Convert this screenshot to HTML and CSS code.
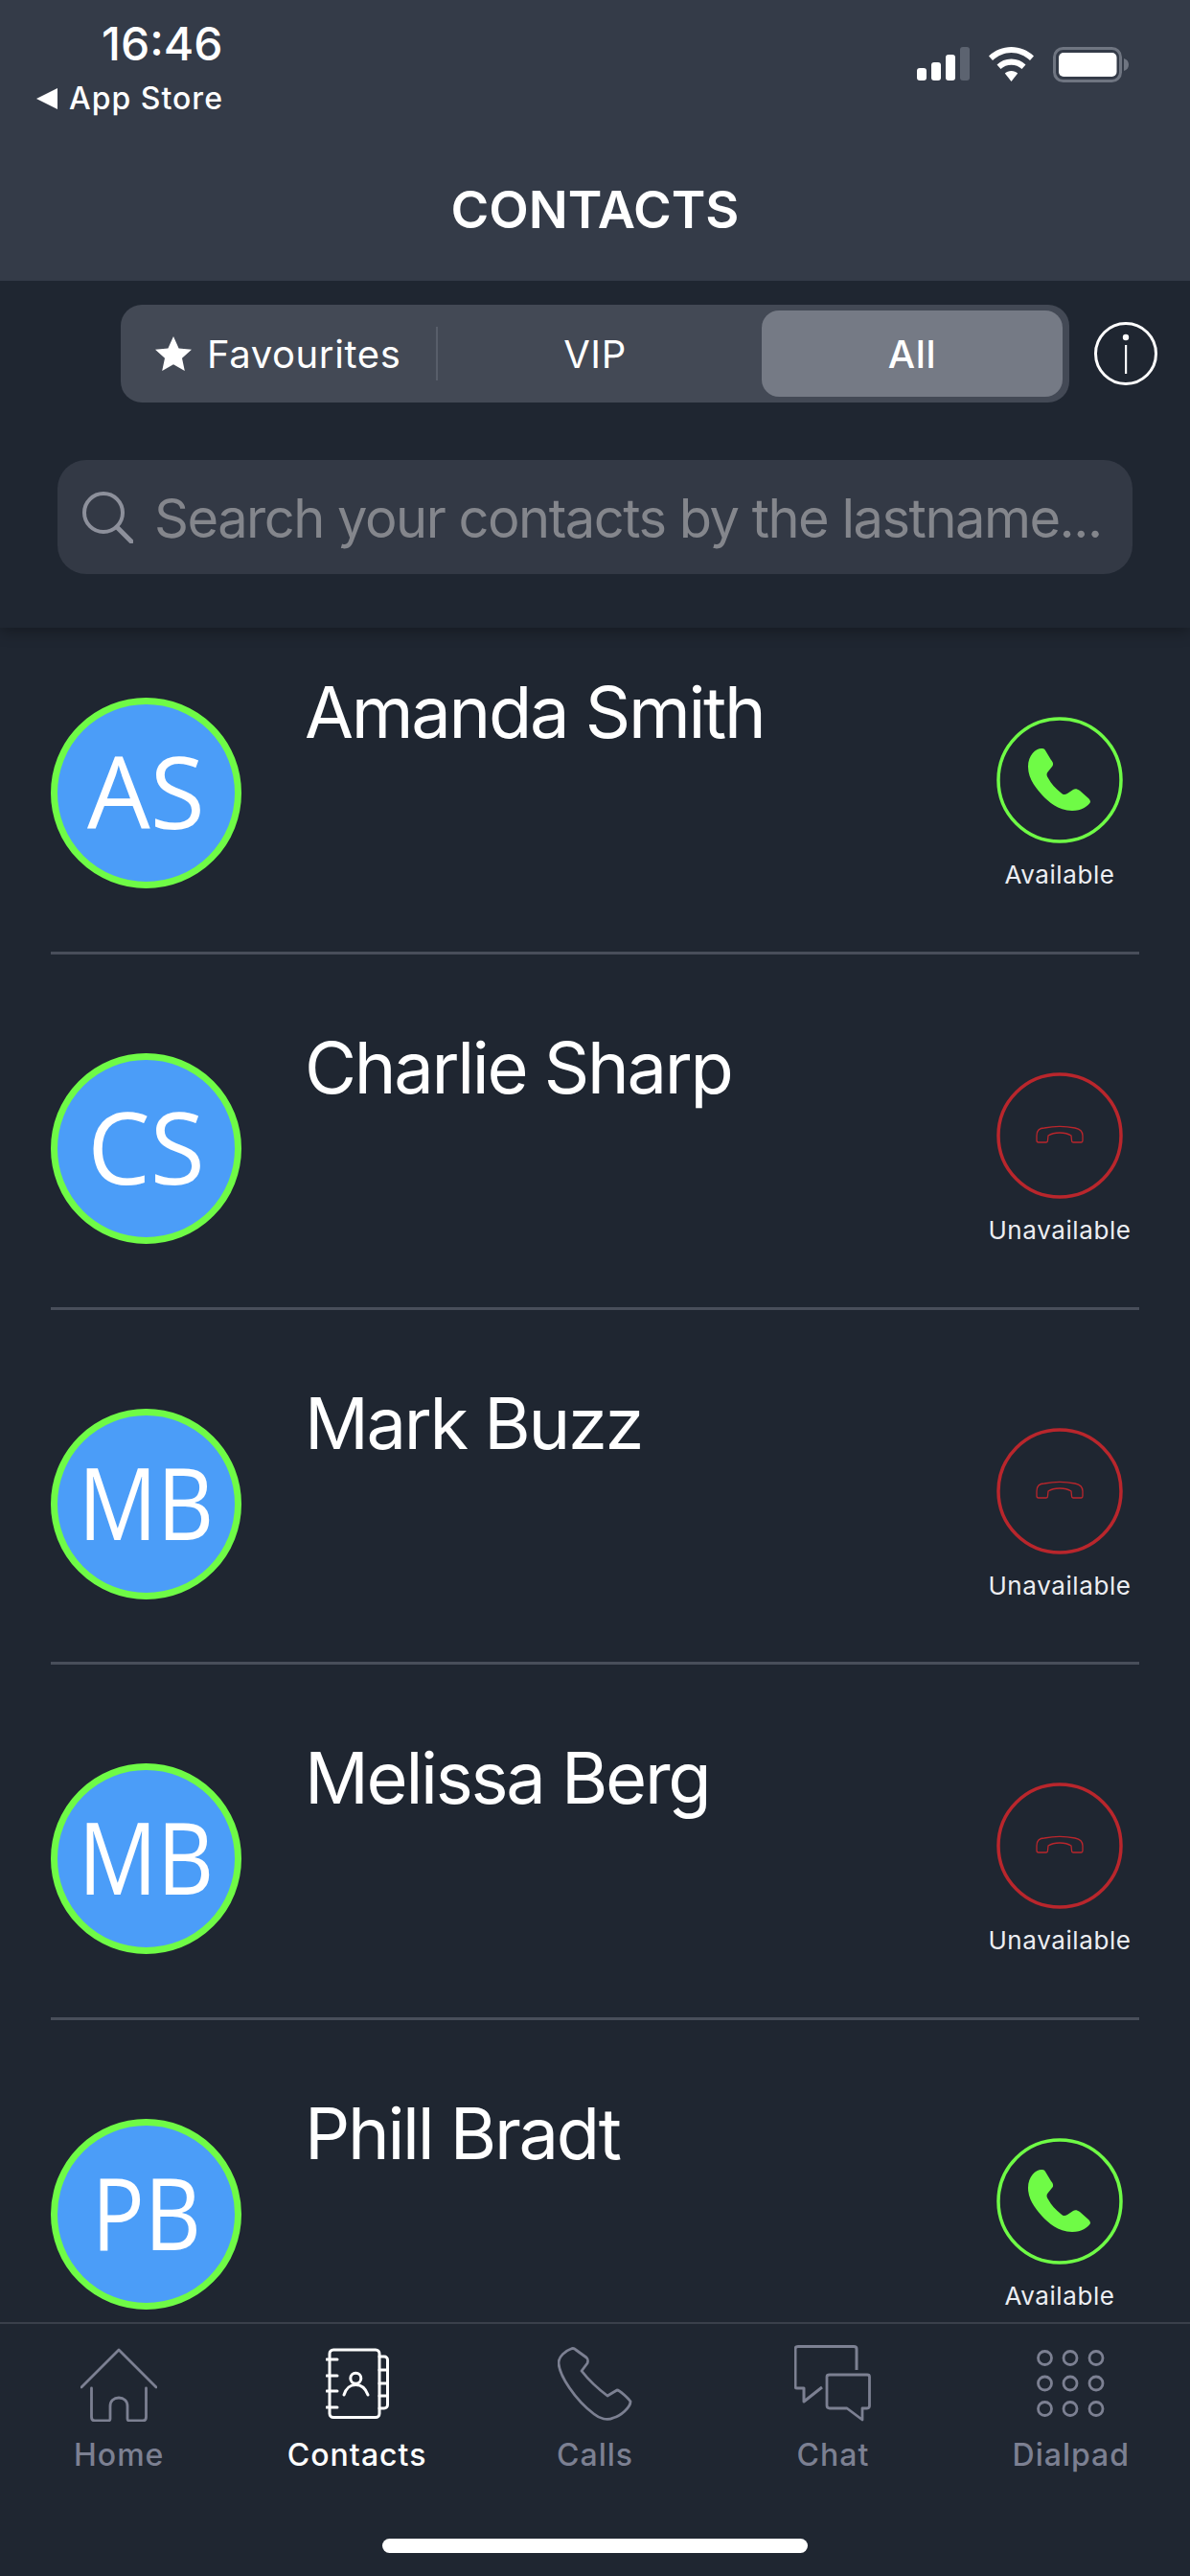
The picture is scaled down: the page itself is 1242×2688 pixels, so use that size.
FILE: index.html
```html
<!DOCTYPE html>
<html lang="en">
<head>
    <meta charset="UTF-8">
    <meta name="viewport" content="width=device-width, initial-scale=1.0">
    <title>Contacts</title>
    <link rel="stylesheet" href="styles.css">
</head>
<body>
    <svg class="defs" width="0" height="0">
        <symbol id="phone-on" viewBox="0 0 132 132">
            <circle cx="66" cy="66" r="64" fill="none" stroke="#6ffb46" stroke-width="3.5"/>
            <path fill="#6ffb46" d="M47 33C41 33 33 40 33 52C33 66 43 76 48 82C54 88 64 98 79 98C89 98 96 93 98 89C98 87 97 86 96 85L87 77C84 75 82 75 80 76L74 80C71 82 69 81 67 79C62 75 57 70 54 64C52 61 52 59 54 57L58 52C60 50 59 47 57 45L51 35C50 33 48 33 47 33Z"/>
        </symbol>
        <symbol id="phone-off" viewBox="0 0 132 132">
            <circle cx="66" cy="66" r="64" fill="none" stroke="#b9262c" stroke-width="3.5"/>
            <path fill="none" stroke="#b9262c" stroke-width="1.3" d="M42 66C42 60 45 58 50 58C60 56 72 56 82 58C87 59 90 61 90 66V71C90 72 89.500 73 88.500 73H80C79 73 78.500 72 78.500 71L78 66C72 62 60 62 54 66L53.500 71C53.500 72 53 73 52 73H44C43 73 42 72 42 71Z"/>
        </symbol>
    </svg>

    <div class="app">
        <header class="topbar">
            <div class="status">
                <div class="status-left">
                    <div class="time">16:46</div>
                    <div class="back"><span class="back-arrow"></span>App Store</div>
                </div>
                <div class="status-right">
                    <svg width="55" height="35" viewBox="0 0 55 35">
                        <rect x="0" y="22" width="10" height="13" rx="3" fill="#fff"/>
                        <rect x="15" y="16" width="10" height="19" rx="3" fill="#fff"/>
                        <rect x="30" y="8" width="10" height="27" rx="3" fill="#fff"/>
                        <rect x="45" y="0" width="10" height="35" rx="3" fill="#5c6370"/>
                    </svg>
                    <svg width="47" height="36" viewBox="0 0 47 36">
                        <path fill="#fff" d="M23.500 0C14.500 0 6.500 3.500 0 9.500L4 14C9.500 9 16 6 23.500 6S37.500 9 43 14L47 9.500C40.500 3.500 32.500 0 23.500 0Z"/>
                        <path fill="#fff" d="M23.500 12.500C17.500 12.500 12.500 14.800 8.500 18.500L12.500 23C15.500 20.300 19.300 18.800 23.500 18.800S31.500 20.300 34.500 23L38.500 18.500C34.500 14.800 29.500 12.500 23.500 12.500Z"/>
                        <path fill="#fff" d="M23.500 25C20.800 25 18.500 26 16.800 27.600L23.500 36L30.200 27.600C28.500 26 26.200 25 23.500 25Z"/>
                    </svg>
                    <svg width="79" height="37" viewBox="0 0 79 37">
                        <rect x="1.500" y="1.500" width="69" height="34" rx="9" fill="none" stroke="#6f7581" stroke-width="3"/>
                        <rect x="6" y="6" width="60.500" height="25" rx="5" fill="#fff"/>
                        <path fill="#6f7581" d="M74 12C77 13 79 15 79 18.500S77 24 74 25Z"/>
                    </svg>
                </div>
            </div>
            <h1 class="title">CONTACTS</h1>
        </header>

        <section class="filters">
            <div class="segment-row">
                <div class="segment">
                    <div class="seg seg-fav">
                        <svg width="38" height="36" viewBox="0 0 38 36"><path fill="#fff" d="M19 0L24.600 12.400L38 13.800L28 22.800L30.800 36L19 29.300L7.200 36L10 22.800L0 13.800L13.400 12.400Z"/></svg>
                        <span>Favourites</span>
                    </div>
                    <div class="seg-divider"></div>
                    <div class="seg seg-vip">VIP</div>
                    <div class="seg seg-all">All</div>
                </div>
                <svg class="info" width="66" height="66" viewBox="0 0 66 66">
                    <circle cx="33" cy="33" r="31.500" fill="none" stroke="#fff" stroke-width="3"/>
                    <circle cx="33" cy="16" r="3.200" fill="#fff"/>
                    <rect x="32" y="24" width="2.200" height="30" fill="#fff"/>
                </svg>
            </div>
            <div class="search">
                <svg width="53" height="54" viewBox="0 0 53 54">
                    <circle cx="22" cy="22" r="20" fill="none" stroke="#8d909b" stroke-width="4"/>
                    <path d="M36 37L51 52" stroke="#8d909b" stroke-width="5" stroke-linecap="round"/>
                </svg>
                <span class="search-text">Search your contacts by the lastname...</span>
            </div>
        </section>

        <main class="list">
            <div class="row">
                <div class="avatar"><span>AS</span></div>
                <div class="name">Amanda Smith</div>
                <div class="state"><svg class="state-icon"><use href="#phone-on"/></svg><span class="state-label">Available</span></div>
            </div>
            <div class="row">
                <div class="avatar"><span>CS</span></div>
                <div class="name">Charlie Sharp</div>
                <div class="state"><svg class="state-icon"><use href="#phone-off"/></svg><span class="state-label">Unavailable</span></div>
            </div>
            <div class="row">
                <div class="avatar"><span class="narrow">MB</span></div>
                <div class="name">Mark Buzz</div>
                <div class="state"><svg class="state-icon"><use href="#phone-off"/></svg><span class="state-label">Unavailable</span></div>
            </div>
            <div class="row">
                <div class="avatar"><span class="narrow">MB</span></div>
                <div class="name">Melissa Berg</div>
                <div class="state"><svg class="state-icon"><use href="#phone-off"/></svg><span class="state-label">Unavailable</span></div>
            </div>
            <div class="row">
                <div class="avatar"><span class="narrow">PB</span></div>
                <div class="name">Phill Bradt</div>
                <div class="state"><svg class="state-icon"><use href="#phone-on"/></svg><span class="state-label">Available</span></div>
            </div>
        </main>

        <nav class="tabbar">
            <div class="tabs">
                <div class="tab">
                    <svg width="80" height="80" viewBox="0 -4 80 80" fill="none" stroke="#7c8092" stroke-width="2.800" stroke-linecap="round" stroke-linejoin="round">
                        <path d="M1 40L40 1L79 40"/>
                        <path d="M11.500 41V71C11.500 73.500 13 75 15 75H29C30.500 75 31 74 31 73V60C31 54 35 51 40 51S49 54 49 60V73C49 74 49.500 75 51 75H65C67 75 68.500 73.500 68.500 71V41"/>
                    </svg>
                    <span>Home</span>
                </div>
                <div class="tab active">
                    <svg width="66" height="80" viewBox="0 -4 66 80" fill="none" stroke="#fff" stroke-width="3" stroke-linecap="round" stroke-linejoin="round">
                        <rect x="4" y="1" width="52" height="70.500" rx="4"/>
                        <path d="M56 8H61C63 8 64.500 9.500 64.500 11.500V58.500C64.500 60.500 63 62 61 62H56M56 22H64.500M56 36H64.500M56 49H64.500"/>
                        <path d="M1 11H12M1 28H12M1 44H12M1 61H12"/>
                        <circle cx="31.300" cy="30.700" r="5.500"/>
                        <path d="M19 48C21 41 26 37.500 31.300 37.500S41.500 41 44 48"/>
                    </svg>
                    <span>Contacts</span>
                </div>
                <div class="tab">
                    <svg width="78" height="80" viewBox="0 -2 78 80" fill="none" stroke="#7c8092" stroke-width="2.800" stroke-linejoin="round">
                        <path d="M14 2C8 4 1 10 1 17C2 30 18 55 38 70C44 75 52 77 58 74C66 72 76 63 76 57C75 55 65 45 62 45L52 51C44 45 32 34 25 25L31 17C32 14 32 13 30 11L19 3C17 1 16 1 14 2Z"/>
                    </svg>
                    <span>Calls</span>
                </div>
                <div class="tab">
                    <svg width="80" height="80" viewBox="0 0 80 80" fill="none" stroke="#7c8092" stroke-width="2.800" stroke-linejoin="round">
                        <path d="M65 26V4C65 2 64 1.500 62 1.500H4C2 1.500 1 2.500 1 4V43C1 44.500 2 45 3 45H10V59L29 44" stroke-width="3"/>
                        <path d="M37 31H76C78 31 78.500 32 78.500 33V63C78.500 65 78 66 76 66H71V78L55 66H37C35 66 34 65 34 63V33C34 32 35 31 37 31Z"/>
                    </svg>
                    <span>Chat</span>
                </div>
                <div class="tab">
                    <svg width="71" height="80" viewBox="0 -5 71 80" fill="none" stroke="#7c8092" stroke-width="2.800">
                        <circle cx="8.500" cy="8.500" r="7"/><circle cx="35" cy="8.500" r="7"/><circle cx="62" cy="8.500" r="7"/>
                        <circle cx="8.500" cy="35" r="7"/><circle cx="35" cy="35" r="7"/><circle cx="62" cy="35" r="7"/>
                        <circle cx="8.500" cy="61.500" r="7"/><circle cx="35" cy="61.500" r="7"/><circle cx="62" cy="61.500" r="7"/>
                    </svg>
                    <span>Dialpad</span>
                </div>
            </div>
            <div class="home-bar"></div>
        </nav>
    </div>
</body>
</html>
```

FILE: styles.css
```css
* { box-sizing: border-box; }
html, body { margin: 0; padding: 0; }
body { background: #1f2631; color: #fff; font-family: Inter, "Noto Sans", sans-serif; }
svg { display: block; flex-shrink: 0; }
.defs { position: absolute; }

.app { width: 1242px; height: 2688px; display: flex; flex-direction: column; overflow: hidden; }

/* top bar */
.topbar { height: 293px; background: #343b48; position: relative; z-index: 3; }
.status { display: flex; justify-content: space-between; padding: 21px 64px 0 38px; }
.time { font-size: 48px; line-height: 50px; font-weight: 500; margin-left: 68px; }
.back { display: flex; align-items: center; font-size: 32px; line-height: 40px; font-weight: 500; margin-top: 12px; letter-spacing: 1px; }
.back-arrow { width: 0; height: 0; border-style: solid; border-width: 11px 22px 11px 0; border-color: transparent #fff transparent transparent; margin-right: 12px; }
.status-right { display: flex; gap: 20px; align-items: flex-start; padding-top: 28px; }
.title { margin: 66px 0 0; font-size: 54px; line-height: 60px; font-weight: 600; text-align: center; }

/* filter area */
.filters { height: 362px; padding: 25px 0 56px 60px; background: #1f2631; position: relative; z-index: 2; box-shadow: 0 5px 14px rgba(0, 0, 0, 0.28); }
.segment-row { display: flex; align-items: center; padding-left: 66px; gap: 26px; }
.segment { width: 990px; height: 102px; background: #434955; border-radius: 22px; display: flex; align-items: center; padding: 6px 7px 6px 0; font-size: 40px; letter-spacing: 0.6px; }
.seg { height: 90px; display: flex; align-items: center; justify-content: center; }
.seg-fav { width: 329px; padding-left: 36px; justify-content: flex-start; gap: 16px; }
.seg-divider { width: 2px; height: 56px; background: #585e6a; }
.seg-vip { width: 338px; padding-right: 10px; }
.seg-all { flex: 1; background: #757a85; border-radius: 18px; font-weight: 500; }

.search { height: 119px; margin-top: 60px; width: 1122px; background: #333945; border-radius: 30px; display: flex; align-items: center; padding-left: 26px; gap: 22px; }
.search-text { font-size: 56px; letter-spacing: -1.5px; line-height: 60px; padding-top: 2px; color: #84868c; white-space: nowrap; }

/* contact rows */
.list { flex: 1; overflow: hidden; padding: 0 53px; }
.row { height: 370.67px; border-bottom: 3px solid #484e5a; display: flex; align-items: flex-start; }
.row:first-child { margin-top: -29.7px; }
.row:last-child { border-bottom: 0; }
.avatar { width: 199px; height: 199px; margin-top: 103px; padding-bottom: 6px; border-radius: 50%; background: #4b9df8; border: 7px solid #6ffb46; display: flex; align-items: center; justify-content: center; font-family: "Open Sans", sans-serif; font-size: 104px; font-weight: 500; flex-shrink: 0; }
.avatar .narrow { display: inline-block; transform: scaleX(0.88); }
.name { margin: 78px 0 0 66px; font-size: 74px; line-height: 80px; letter-spacing: -2.3px; white-space: nowrap; }
.state { margin: 123px 0 0 auto; width: 166px; display: flex; flex-direction: column; align-items: center; flex-shrink: 0; }
.state-icon { width: 132px; height: 132px; }
.state-label { margin-top: 18px; font-size: 26px; line-height: 30px; letter-spacing: 0.6px; white-space: nowrap; color: #eceef2; }

/* tab bar */
.tabbar { height: 265px; border-top: 2px solid #3a404b; padding-top: 22px; background: #1f2631; display: flex; flex-direction: column; align-items: center; }
.tabs { width: 100%; display: grid; grid-template-columns: repeat(5, 1fr); }
.tab { display: flex; flex-direction: column; align-items: center; color: #7c8092; font-size: 32px; line-height: 40px; font-weight: 500; letter-spacing: 1px; }
.tab span { margin-top: 15px; }
.tab.active { color: #fff; }
.home-bar { width: 444px; height: 15px; margin-top: 67px; background: #fff; border-radius: 8px; }
```
